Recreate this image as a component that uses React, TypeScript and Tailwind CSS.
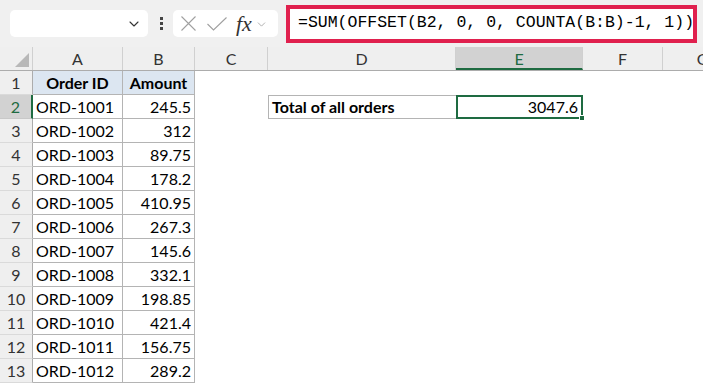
import { ChevronDown } from 'lucide-react';

const orders = [
  ['ORD-1001', '245.5'],
  ['ORD-1002', '312'],
  ['ORD-1003', '89.75'],
  ['ORD-1004', '178.2'],
  ['ORD-1005', '410.95'],
  ['ORD-1006', '267.3'],
  ['ORD-1007', '145.6'],
  ['ORD-1008', '332.1'],
  ['ORD-1009', '198.85'],
  ['ORD-1010', '421.4'],
  ['ORD-1011', '156.75'],
  ['ORD-1012', '289.2'],
];

const columns = [
  { name: 'A', w: 'w-[90px]' },
  { name: 'B', w: 'w-[72px]' },
  { name: 'C', w: 'w-[73px]' },
  { name: 'D', w: 'w-[188px]' },
  { name: 'E', w: 'w-[127px]' },
  { name: 'F', w: 'w-[80px]' },
  { name: 'G', w: 'w-[80px]' },
];

const Toolbar = () => (
  <div className="flex h-[47px] items-center bg-[#f0f0f0] pl-[10px]">
    <div className="flex h-[27px] w-[138px] items-center justify-end rounded-[5px] bg-white pr-[6px]">
      <ChevronDown size={16} strokeWidth={1.6} className="text-[#333]" />
    </div>
    <div className="ml-[10px] flex w-[6px] flex-col items-center gap-[2px]">
      <span className="h-[3px] w-[3px] bg-[#444]" />
      <span className="h-[3px] w-[3px] bg-[#444]" />
      <span className="h-[3px] w-[3px] bg-[#444]" />
    </div>
    <div className="ml-[9px] flex h-[27px] w-[105px] items-center rounded-[5px] bg-white pl-[7px]">
      <svg width="17" height="17" viewBox="0 0 17 17" className="text-[#a0a0a0]">
        <path d="M1.5 1.5 L15.5 15.5 M15.5 1.5 L1.5 15.5" stroke="currentColor" strokeWidth="1.1" fill="none" />
      </svg>
      <svg width="22" height="16" viewBox="0 0 22 16" className="ml-[9px] text-[#a0a0a0]">
        <path d="M1.5 8 L7.5 14 L20.5 1.5" stroke="currentColor" strokeWidth="1.1" fill="none" />
      </svg>
      <span className="ml-[8px] font-['Liberation_Serif',serif] text-[22px] italic leading-none text-[#333]">
        fx
      </span>
      <ChevronDown size={13} strokeWidth={1.4} className="ml-[3px] mt-[2px] text-[#999]" />
    </div>
    <div className="ml-[8px] flex h-[38px] w-[411px] shrink-0 items-center overflow-hidden whitespace-nowrap border-4 border-[#e0204e] bg-white pl-[8px] font-['Liberation_Mono',monospace] text-[16.5px] text-black">
      =SUM(OFFSET(B2, 0, 0, COUNTA(B:B)-1, 1))
    </div>
  </div>
);

const HeaderRow = () => (
  <div className="flex h-[24px] border-b border-[#acacac] bg-[#efefef] text-[16px] text-[#333]">
    <div className="relative w-[33px] shrink-0 border-r border-[#d0d0d0]">
      <div className="absolute bottom-[3px] right-[3px] h-0 w-0 border-b-[14px] border-l-[14px] border-b-[#b8b8b8] border-l-transparent" />
    </div>
    {columns.map((c) =>
      c.name === 'E' ? (
        <div
          key={c.name}
          className={`${c.w} flex shrink-0 items-center justify-center border-b-2 border-r border-b-[#1e6b41] border-r-[#d0d0d0] bg-[#d2d2d2] pt-[2px] text-[#1e6b41]`}
        >
          {c.name}
        </div>
      ) : (
        <div key={c.name} className={`${c.w} flex shrink-0 items-center justify-center border-r border-[#d0d0d0]`}>
          {c.name}
        </div>
      )
    )}
  </div>
);

const RowHead = ({ n, active }: { n: number; active?: boolean }) =>
  active ? (
    <div className="flex w-[33px] shrink-0 items-center justify-center border-b border-r-2 border-b-[#c8c8c8] border-r-[#1e6b41] bg-[#d2d2d2] text-[#1e6b41]">
      {n}
    </div>
  ) : (
    <div className="flex w-[33px] shrink-0 items-center justify-center border-b border-r border-b-[#dadada] border-r-[#acacac] bg-[#efefef] text-[#333]">
      {n}
    </div>
  );

export default function App() {
  return (
    <div className="h-[384px] w-[703px] overflow-hidden bg-white font-['Lato',sans-serif]">
      <Toolbar />
      <HeaderRow />
      <div className="text-[16px] text-black">
        <div className="flex h-[24px]">
          <RowHead n={1} />
          <div className="flex w-[90px] shrink-0 items-center justify-center border-b border-r border-[#b4b4b4] bg-[#dce6f1] font-bold">
            Order ID
          </div>
          <div className="flex w-[72px] shrink-0 items-center justify-center border-b border-r border-[#b4b4b4] bg-[#dce6f1] font-bold">
            Amount
          </div>
        </div>
        {orders.map(([id, amount], i) => (
          <div key={id} className="flex h-[24px]">
            <RowHead n={i + 2} active={i === 0} />
            <div className="flex w-[90px] shrink-0 items-center border-b border-r border-[#b4b4b4] pl-[3px]">{id}</div>
            <div className="flex w-[72px] shrink-0 items-center justify-end border-b border-r border-[#b4b4b4] pr-[3px]">
              {amount}
            </div>
            {i === 0 && (
              <>
                <div className="w-[73px] shrink-0" />
                <div className="flex w-[188px] shrink-0 items-center border border-r-0 border-[#b4b4b4] pl-[3px] font-bold">
                  Total of all orders
                </div>
                <div className="relative flex w-[127px] shrink-0 items-center justify-end border-2 border-[#1e6b41] pr-[3px]">
                  3047.6
                  <span className="absolute -bottom-[4px] -right-[4px] h-[6px] w-[6px] border border-white bg-[#1e6b41]" />
                </div>
              </>
            )}
          </div>
        ))}
      </div>
    </div>
  );
}
